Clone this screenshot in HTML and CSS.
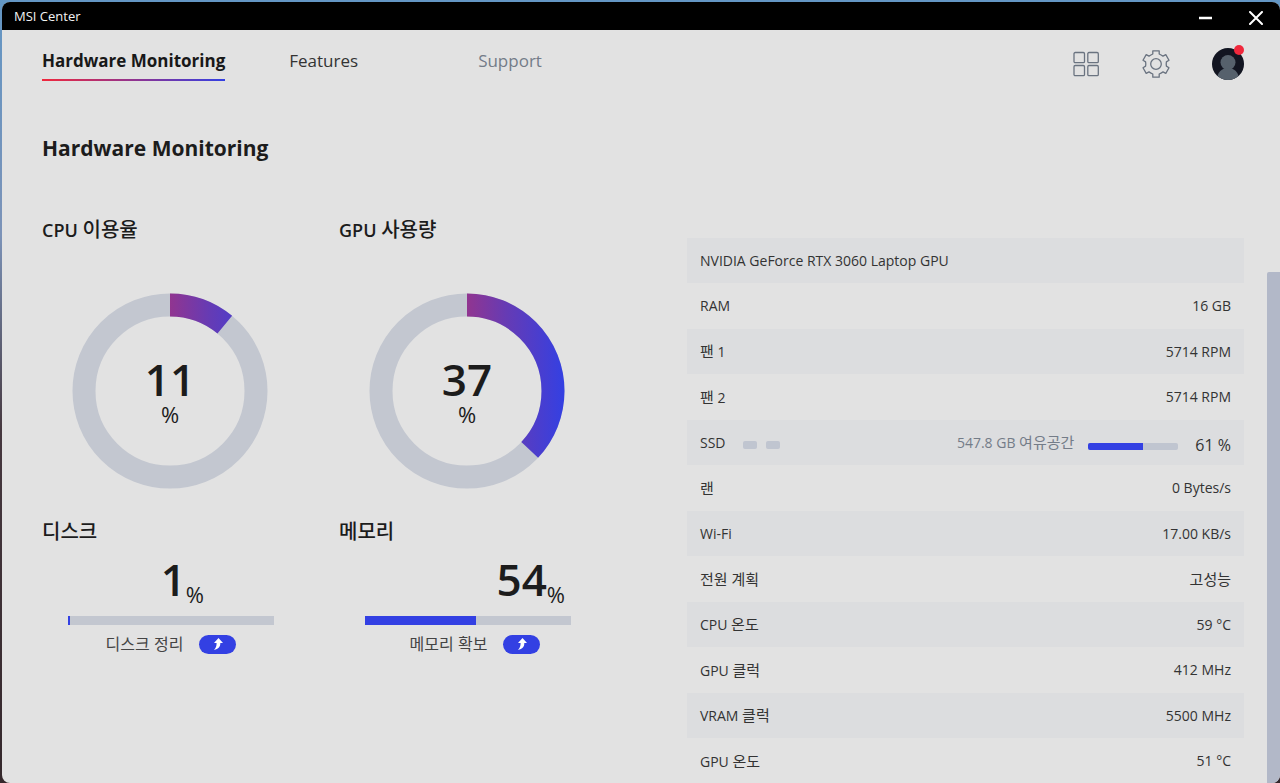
FILE: index.html
```
<!DOCTYPE html>
<html lang="ko">
<head>
  <meta charset="UTF-8">
  <meta name="viewport" content="width=device-width, initial-scale=1">
  <title>MSI Center</title>
  <link rel="stylesheet" href="styles.css">
</head>
<body>

  <div class="window">
    <header class="titlebar">
      <span class="app-name">MSI Center</span>
      <div class="window-buttons">
        <button type="button" aria-label="최소화">
          <svg width="14" height="14" viewBox="0 0 14 14"><path d="M0 7h13" stroke="#fff" stroke-width="2.4"/></svg>
        </button>
        <button type="button" aria-label="닫기">
          <svg width="14" height="14" viewBox="0 0 14 14"><path d="M1 1l12 12M13 1L1 13" stroke="#fff" stroke-width="2" stroke-linecap="round"/></svg>
        </button>
      </div>
    </header>

    <div class="topbar">
      <nav class="tabs">
        <a href="#" class="tab active">Hardware Monitoring</a>
        <a href="#" class="tab">Features</a>
        <a href="#" class="tab muted">Support</a>
      </nav>
      <div class="tools">
        <button type="button" aria-label="앱">
          <svg width="28" height="28" viewBox="0 0 28 28" fill="none" stroke="#6a7380" stroke-width="1.3">
            <rect x="2" y="2.5" width="10.5" height="10.2" rx="1.2"/>
            <rect x="15.8" y="2.5" width="10.5" height="10.2" rx="1.2"/>
            <rect x="2" y="15.5" width="10.5" height="10.2" rx="1.2"/>
            <rect x="15.8" y="15.5" width="10.5" height="10.2" rx="1.2"/>
          </svg>
        </button>
        <button type="button" aria-label="설정">
          <svg width="28" height="28" viewBox="0 0 28 28" fill="none" stroke="#6a7380" stroke-width="1.3" stroke-linejoin="round">
            <path d="M10.8.8h6.400V4Q19 4.800 21 6.100l2.800-1.500L27 10.200l-2.600 1.700Q24 14 24.400 16.100l2.600 1.700-3.200 5.600L21 21.900Q19 23.200 17.200 24v3.200h-6.400V24Q9 23.200 7 21.900l-2.800 1.500L1 17.800l2.600-1.700Q4 14 3.600 11.900L1 10.200l3.200-5.600L7 6.100Q9 4.800 10.800 4z"/>
            <circle cx="14" cy="14" r="5.3"/>
          </svg>
        </button>
        <button type="button" class="avatar" aria-label="계정">
          <svg width="32" height="32" viewBox="0 0 32 32">
            <clipPath id="face"><circle cx="16" cy="16" r="16"/></clipPath>
            <g clip-path="url(#face)">
              <rect width="32" height="32" fill="#121521"/>
              <circle cx="16" cy="14.5" r="7.5" fill="#56616c"/>
              <path d="M5 32c0-8 5-12 11-12s11 4 11 12z" fill="#56616c"/>
            </g>
          </svg>
          <span class="badge"></span>
        </button>
      </div>
    </div>

    <main class="page">
      <div class="content">
        <h1>Hardware Monitoring</h1>

        <div class="columns">
          <div class="gauges">
            <section>
              <h2>CPU <span class="ko">이용율</span></h2>
              <div class="ring">
                <svg width="196" height="196" viewBox="0 0 196 196" fill="none" stroke-width="23">
                  <defs>
                    <linearGradient id="heat" gradientUnits="userSpaceOnUse" x1="0" y1="0" x2="0" y2="196">
                      <stop offset="0" stop-color="#f0283c"/>
                      <stop offset="0.5" stop-color="#913590"/>
                      <stop offset="0.7" stop-color="#663bb4"/>
                      <stop offset="1" stop-color="#3340e3"/>
                    </linearGradient>
                  </defs>
                  <circle cx="98" cy="98" r="86" stroke="#c3c7d0"/>
                  <circle cx="98" cy="98" r="86" stroke="url(#heat)" pathLength="100" stroke-dasharray="11 100" transform="rotate(-90 98 98)"/>
                </svg>
                <div class="reading"><strong>11</strong><span>%</span></div>
              </div>
            </section>

            <section>
              <h2>GPU <span class="ko">사용량</span></h2>
              <div class="ring">
                <svg width="196" height="196" viewBox="0 0 196 196" fill="none" stroke-width="23">
                  <circle cx="98" cy="98" r="86" stroke="#c3c7d0"/>
                  <circle cx="98" cy="98" r="86" stroke="url(#heat)" pathLength="100" stroke-dasharray="37 100" transform="rotate(-90 98 98)"/>
                </svg>
                <div class="reading"><strong>37</strong><span>%</span></div>
              </div>
            </section>

            <section class="usage disk">
              <h2><span class="ko">디스크</span></h2>
              <p class="amount"><strong>1</strong><span>%</span></p>
              <div class="bar"><div class="fill" style="width: 1%"></div></div>
              <div class="action">
                <label for="clean">디스크 정리</label>
                <button type="button" id="clean">
                  <svg width="10" height="12" viewBox="0 0 10 12"><path d="M5.5 0L10 5H7.300C7.500 8.500 5.500 11 1 12c1.800-2 2.600-3.500 2.600-7H1z" fill="#fff"/></svg>
                </button>
              </div>
            </section>

            <section class="usage memory">
              <h2><span class="ko">메모리</span></h2>
              <p class="amount"><strong>54</strong><span>%</span></p>
              <div class="bar"><div class="fill" style="width: 54%"></div></div>
              <div class="action">
                <label for="free">메모리 확보</label>
                <button type="button" id="free">
                  <svg width="10" height="12" viewBox="0 0 10 12"><path d="M5.5 0L10 5H7.300C7.500 8.500 5.500 11 1 12c1.800-2 2.600-3.500 2.600-7H1z" fill="#fff"/></svg>
                </button>
              </div>
            </section>
          </div>

          <table class="specs">
            <tbody>
              <tr><th colspan="2">NVIDIA GeForce RTX 3060 Laptop GPU</th></tr>
              <tr><th>RAM</th><td>16 GB</td></tr>
              <tr><th><span class="ko">팬</span> 1</th><td>5714 RPM</td></tr>
              <tr><th><span class="ko">팬</span> 2</th><td>5714 RPM</td></tr>
              <tr>
                <th><div class="drive">SSD <i></i><i></i></div></th>
                <td>
                  <div class="space">
                    <span class="free">547.8 GB <span class="ko">여유공간</span></span>
                    <div class="mini-bar"><div class="fill" style="width: 61%"></div></div>
                    <span class="percent">61 %</span>
                  </div>
                </td>
              </tr>
              <tr><th><span class="ko">랜</span></th><td>0 Bytes/s</td></tr>
              <tr><th>Wi-Fi</th><td>17.00 KB/s</td></tr>
              <tr><th><span class="ko">전원 계획</span></th><td><span class="ko">고성능</span></td></tr>
              <tr><th>CPU <span class="ko">온도</span></th><td>59 °C</td></tr>
              <tr><th>GPU <span class="ko">클럭</span></th><td>412 MHz</td></tr>
              <tr><th>VRAM <span class="ko">클럭</span></th><td>5500 MHz</td></tr>
              <tr><th>GPU <span class="ko">온도</span></th><td>51 °C</td></tr>
            </tbody>
          </table>
        </div>
      </div>
      <div class="scrollbar"></div>
    </main>
  </div>

</body>
</html>
```
FILE: styles.css
```
* {
  box-sizing: border-box;
}
body {
  margin: 0;
  height: 100vh;
  padding: 2px 0 0 2px;
  overflow: hidden;
  background: linear-gradient(#6396c4, #7c93b8 30%, #46383f 55%, #35282c);
  font-family: "Open Sans", "Noto Sans CJK KR", sans-serif;
  color: #1c1c1c;
}
button {
  display: flex;
  align-items: center;
  justify-content: center;
  padding: 0;
  border: 0;
  background: none;
}
h1, h2, p {
  margin: 0;
}
.window {
  display: flex;
  flex-direction: column;
  height: 100%;
  border-radius: 8px;
  overflow: hidden;
  background: #e2e2e2;
}

/* title bar */
.titlebar {
  display: flex;
  justify-content: space-between;
  align-items: center;
  flex: none;
  height: 28px;
  padding: 0 17px 0 12px;
  background: #000;
  color: #f2f2f2;
}
.app-name {
  font-size: 13px;
}
.window-buttons {
  display: flex;
  gap: 36px;
  padding-top: 3px;
}

/* tabs and tools */
.topbar {
  display: flex;
  justify-content: space-between;
  flex: none;
  height: 68px;
  padding: 16px 36px 0 40px;
}
.tabs {
  display: flex;
  align-items: flex-start;
  gap: 64px;
}
.tab {
  height: 35px;
  color: #333;
  font-size: 17px;
  line-height: 30px;
  text-decoration: none;
}
.tab.active {
  color: #181818;
  font-weight: bold;
  background: linear-gradient(90deg, #f0283c, #3340e3) bottom / 100% 2px no-repeat;
}
.tab.muted {
  margin-left: 56px;
  color: #747c88;
}
.tools {
  display: flex;
  align-items: center;
  gap: 42px;
  height: 36px;
}
.avatar {
  position: relative;
}
.badge {
  position: absolute;
  top: -3px;
  right: 0;
  width: 10px;
  height: 10px;
  border-radius: 50%;
  background: #f0283c;
}

/* page */
.page {
  display: flex;
  flex: 1;
  gap: 23px;
  min-height: 0;
}
.content {
  flex: 1;
  padding: 34px 0 0 40px;
}
h1 {
  font-size: 21px;
  line-height: 32px;
}
.columns {
  display: grid;
  grid-template-columns: 645fr 557fr;
  align-items: start;
}
.gauges {
  display: grid;
  grid-template-columns: 297fr 348fr;
  padding-top: 51px;
}
h2 {
  height: 30px;
  font-size: 18px;
  font-weight: 600;
  line-height: 30px;
}
h2 .ko {
  font-size: 20px;
  font-weight: 500;
}
.ring {
  display: grid;
  width: 196px;
  margin: 48px 0 28px 30px;
}
.ring svg, .reading {
  grid-area: 1 / 1;
}
.reading {
  display: flex;
  flex-direction: column;
  align-items: center;
  padding-top: 61px;
}
.reading strong, .amount strong {
  font-size: 44px;
  font-weight: 600;
  line-height: 50px;
}
.reading span, .amount span {
  font-size: 22px;
  line-height: 20px;
}
.usage .bar, .usage .amount, .usage .action {
  width: 206px;
  margin-left: 26px;
}
.amount {
  display: flex;
  justify-content: flex-end;
  align-items: flex-end;
  height: 69px;
  padding: 0 6px 12px 0;
}
.disk .amount {
  padding-right: 70px;
}
.bar {
  height: 9px;
  background: #c3c7d0;
}
.fill {
  height: 100%;
  background: #3340e3;
}
.action {
  display: flex;
  align-items: center;
  justify-content: center;
  gap: 16px;
  margin-top: 9px;
  font-size: 16px;
  line-height: 20px;
  color: #444;
}
.memory .action {
  padding-left: 14px;
}
.action button {
  width: 37px;
  height: 19px;
  border-radius: 10px;
  background: #3340e3;
}

/* spec list */
.specs {
  width: 100%;
  margin-top: 74px;
  border-collapse: collapse;
  font-size: 14px;
  line-height: 20px;
  color: #333;
}
.specs .ko {
  font-size: 15px;
}
.specs tr {
  height: 46px;
}
.specs tr:nth-child(odd) {
  height: 45px;
  background: #dcdddf;
}
.specs th {
  padding: 0 13px;
  font-weight: normal;
  text-align: left;
}
.specs td {
  padding: 0 13px;
  text-align: right;
}
.drive {
  display: flex;
  align-items: center;
  gap: 9px;
}
.drive i {
  width: 14px;
  height: 8px;
  margin-top: 4px;
  border-radius: 2px;
  background: #c0c5d0;
}
.drive i:first-of-type {
  margin-left: 8px;
}
.space {
  display: flex;
  align-items: center;
  justify-content: flex-end;
}
.free {
  color: #747c88;
}
.mini-bar {
  width: 90px;
  height: 7px;
  margin: 8px 17px 0 14px;
  border-radius: 2px;
  overflow: hidden;
  background: #c0c5d0;
}
.percent {
  padding-top: 4px;
  font-size: 16px;
}
.scrollbar {
  width: 13px;
  margin-top: 174px;
  border-radius: 2px 0 0 0;
  background: #b2b8c8;
}
```
